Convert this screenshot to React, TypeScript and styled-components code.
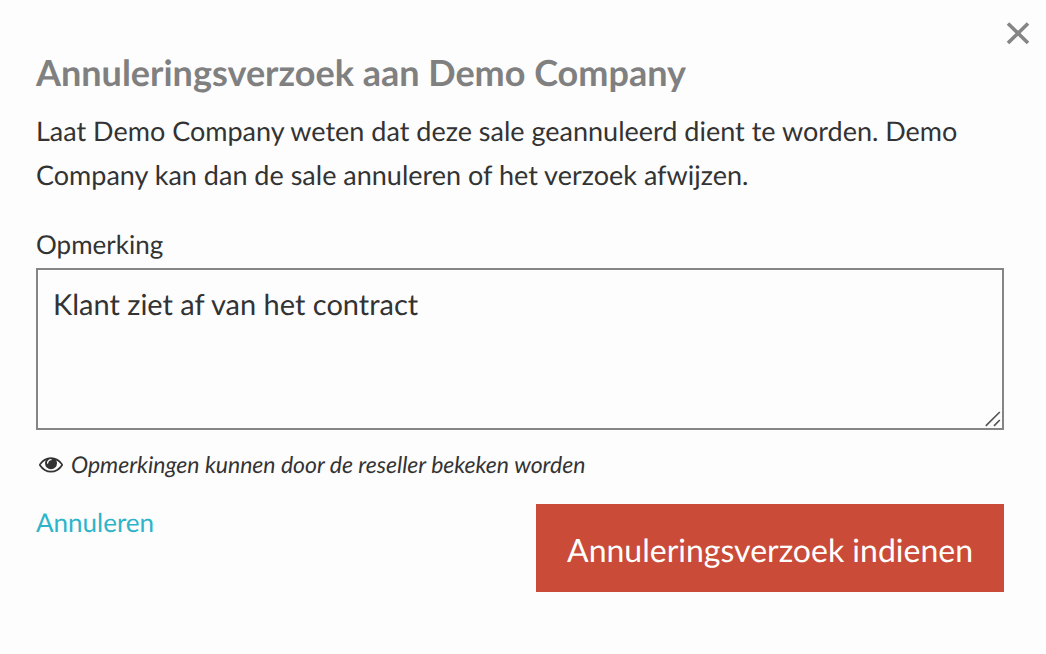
import React, { useState } from "react";
import styled, { createGlobalStyle } from "styled-components";

const GlobalStyle = createGlobalStyle`
  *, *::before, *::after { box-sizing: border-box; }
  body {
    margin: 0;
    background: #fdfdfd;
    color: #333;
    font-family: Lato, "Open Sans", sans-serif;
    text-rendering: geometricPrecision;
  }
`;

const Dialog = styled.section`
  position: relative;
  padding: 47px 42px 62px 36px;
`;

const CloseButton = styled.button`
  position: absolute;
  top: 21px;
  right: 16px;
  width: 24px;
  height: 24px;
  padding: 0;
  border: 0;
  background: none;
  color: #858585;
  cursor: pointer;
  svg { display: block; }
`;

const Title = styled.h1`
  margin: 0 0 12px;
  color: #808080;
  font-size: 36px;
  line-height: 50px;
  font-weight: 700;
`;

const Intro = styled.p`
  margin: 0 0 31px;
  font-size: 27px;
  line-height: 44px;
`;

const Label = styled.label`
  display: block;
  margin-bottom: 8px;
  font-size: 26px;
  line-height: 32px;
`;

const RemarkBox = styled.div`
  position: relative;
`;

const Remark = styled.textarea`
  display: block;
  width: 100%;
  height: 162px;
  padding: 13px 15px;
  border: 2px solid #858585;
  border-radius: 0;
  background: #fdfdfd;
  color: inherit;
  font-family: inherit;
  font-size: 29px;
  line-height: 44px;
  text-rendering: inherit;
  resize: vertical;
  &::-webkit-resizer { background: transparent; }
`;

const Grip = styled.svg`
  position: absolute;
  right: 3px;
  bottom: 3px;
  pointer-events: none;
`;

const Hint = styled.p`
  display: flex;
  align-items: center;
  gap: 8px;
  margin: 18px 0 24px;
  padding-left: 3px;
  font-size: 23px;
  line-height: 32px;
  font-style: italic;
`;

const Actions = styled.div`
  display: flex;
  align-items: flex-start;
  justify-content: space-between;
`;

const CancelLink = styled.a`
  color: #2db4c9;
  font-size: 26px;
  line-height: 36px;
  text-decoration: none;
`;

const SubmitButton = styled.button`
  padding: 24px 31px 20px;
  border: 0;
  background: #ca4b37;
  color: #fff;
  font-family: inherit;
  font-size: 32px;
  line-height: 44px;
  text-rendering: inherit;
  cursor: pointer;
`;

export default function App() {
  const [remark, setRemark] = useState("Klant ziet af van het contract");
  return (
    <>
      <GlobalStyle />
      <Dialog role="dialog" aria-labelledby="title">
        <CloseButton type="button" aria-label="Sluiten">
          <svg width="24" height="24" viewBox="0 0 24 24" fill="none" stroke="currentColor" strokeWidth="3.6">
            <path d="M2 2.500L22 22M22 2.500L2 22" />
          </svg>
        </CloseButton>
        <Title id="title">Annuleringsverzoek aan Demo Company</Title>
        <Intro>
          Laat Demo Company weten dat deze sale geannuleerd dient te worden. Demo Company kan dan de
          sale annuleren of het verzoek afwijzen.
        </Intro>
        <Label htmlFor="remark">Opmerking</Label>
        <RemarkBox>
          <Remark id="remark" value={remark} onChange={(e) => setRemark(e.target.value)} />
          <Grip width="16" height="16" viewBox="0 0 16 16" fill="none" stroke="#555" strokeWidth="1.7" aria-hidden="true">
            <path d="M.8 14.800L14.800 1M9 14.800L14.800 9" />
          </Grip>
        </RemarkBox>
        <Hint>
          <svg width="24" height="24" viewBox="0 0 1792 1792" fill="currentColor" aria-hidden="true">
            <path d="M1664 960q-152-236-381-353 61 104 61 225 0 185-131.500 316.500t-316.500 131.500-316.500-131.500-131.500-316.500q0-121 61-225-229 117-381 353 133 205 333.500 326.500t434.500 121.500 434.500-121.500 333.500-326.500zM944 576q0-20-14-34t-34-14q-125 0-214.500 89.500t-89.500 214.500q0 20 14 34t34 14 34-14 14-34q0-86 61-147t147-61q20 0 34-14t14-34zM1792 960q0 34-20 69-140 230-376.500 368.500t-499.500 138.500-499.500-139-376.500-368q-20-35-20-69t20-69q140-229 376.500-368t499.500-139 499.500 139 376.500 368q20 35 20 69z" />
          </svg>
          <span>Opmerkingen kunnen door de reseller bekeken worden</span>
        </Hint>
        <Actions>
          <CancelLink href="#">Annuleren</CancelLink>
          <SubmitButton type="button">Annuleringsverzoek indienen</SubmitButton>
        </Actions>
      </Dialog>
    </>
  );
}
